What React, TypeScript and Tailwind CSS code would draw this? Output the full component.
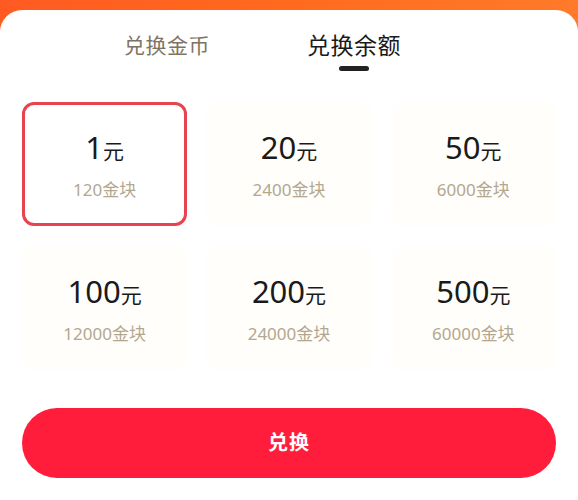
import { useState } from "react"

const options = [
  { yuan: 1, coins: 120 },
  { yuan: 20, coins: 2400 },
  { yuan: 50, coins: 6000 },
  { yuan: 100, coins: 12000 },
  { yuan: 200, coins: 24000 },
  { yuan: 500, coins: 60000 },
]

export default function App() {
  const [selected, setSelected] = useState(0)

  return (
    <div
      className="w-[578px] h-[500px] overflow-hidden bg-gradient-to-r from-[#ff5a22] via-[#ff6a1e] to-[#ff7a2a]"
      style={{ fontFamily: '"Noto Sans", "Noto Sans CJK SC", sans-serif' }}
    >
      <div className="mt-[10px] h-[490px] bg-white rounded-t-[22px] flex flex-col">
        <div className="flex items-start pl-[124px] pt-[20px] h-[92px]">
          <div className="text-[21px] leading-[30px] text-[#7d7464] tracking-[0.5px]">兑换金币</div>
          <div className="ml-[97px] flex flex-col items-center">
            <div className="text-[23px] leading-[30px] text-[#1a1a1a] tracking-[0.5px]">兑换余额</div>
            <div className="mt-[6px] w-[30px] h-[5px] rounded-full bg-[#222]" />
          </div>
        </div>

        <div className="grid grid-cols-3 gap-x-[19px] gap-y-[20px] px-[22px]">
          {options.map((o, i) => (
            <button
              key={o.yuan}
              onClick={() => setSelected(i)}
              className={
                i === selected
                  ? "h-[124px] rounded-[12px] border-[3px] border-[#e8434f] bg-white flex flex-col items-center justify-center"
                  : "h-[124px] rounded-[12px] border-[3px] border-transparent bg-[#fffefb] flex flex-col items-center justify-center"
              }
            >
              <div className="flex items-baseline text-[#1a1a1a]">
                <span className="text-[31px] leading-[40px]">{o.yuan}</span>
                <span className="text-[21px] leading-[40px]">元</span>
              </div>
              <div className="mt-[8px] text-[17px] leading-[22px] text-[#b3a78f]">{o.coins}金块</div>
            </button>
          ))}
        </div>

        <div className="px-[22px] mt-[38px]">
          <button className="w-full h-[70px] rounded-full bg-[#ff1d3b] text-white text-[20px] font-bold tracking-[1px]">
            兑换
          </button>
        </div>
      </div>
    </div>
  )
}
